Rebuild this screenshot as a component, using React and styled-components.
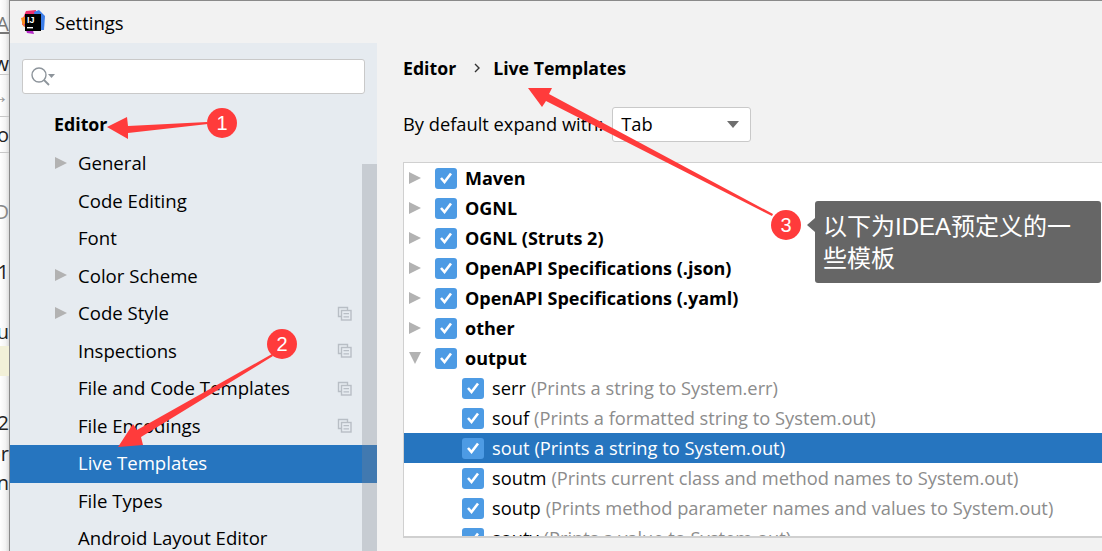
import React from 'react';
import styled, { createGlobalStyle } from 'styled-components';

const UI_FONT = '"Open Sans", "Noto Sans", "Liberation Sans", sans-serif';

const GlobalStyle = createGlobalStyle`
  html, body {
    margin: 0;
    padding: 0;
    background: #f2f2f2;
  }
  * {
    box-sizing: border-box;
  }
`;

const Page = styled.div`
  position: relative;
  display: flex;
  width: 1102px;
  height: 551px;
  overflow: hidden;
  font-family: ${UI_FONT};
  color: #000;
`;

const BackStrip = styled.div`
  flex: 0 0 9px;
  display: flex;
  flex-direction: column;
  overflow: hidden;
  background: linear-gradient(90deg, #fff 0%, #f4f4f4 60%, #dcdcdc 100%);
`;

const BackRow = styled.div`
  flex: 0 0 ${(p) => p.$h}px;
  height: ${(p) => p.$h}px;
  display: flex;
  align-items: center;
  justify-content: flex-end;
  font-size: 20px;
  line-height: 1;
  white-space: nowrap;
  color: ${(p) => p.$color || '#222'};
  background: ${(p) => p.$bg || 'transparent'};
  border-bottom: ${(p) => (p.$line ? '1px solid #c8c8c8' : 'none')};
  text-decoration: ${(p) => (p.$under ? 'underline' : 'none')};
`;

const Window = styled.div`
  flex: 1;
  display: flex;
  flex-direction: column;
  min-width: 0;
  border-top: 1px solid #8a8a8a;
  border-left: 1px solid #8a8a8a;
`;

const TitleBar = styled.div`
  flex: 0 0 42px;
  display: flex;
  align-items: center;
  gap: 10px;
  padding: 1px 0 0 11px;
  background: #f2f2f2;
  font-size: 18.5px;
`;

const LogoMark = styled.svg`
  margin-bottom: 1px;
`;

const Body = styled.div`
  flex: 1;
  display: flex;
  min-height: 0;
`;

const Sidebar = styled.aside`
  position: relative;
  flex: 0 0 367px;
  display: flex;
  flex-direction: column;
  overflow: hidden;
  padding-top: 16px;
  background: #e6ebf0;
`;

const SearchBox = styled.div`
  display: flex;
  align-items: center;
  flex: 0 0 35px;
  margin: 0 12px;
  padding-left: 7px;
  background: #fff;
  border: 1px solid #c9c9c9;
  border-radius: 3px;
`;

const NavList = styled.div`
  display: flex;
  flex-direction: column;
  margin-top: 11px;
`;

const NavRow = styled.div`
  position: relative;
  display: flex;
  align-items: center;
  height: 37.5px;
  flex: none;
  padding-left: 45px;
  font-size: 18.6px;
  color: #000;
`;

const NavSelected = styled(NavRow)`
  height: 38px;
  margin: 1px 0 -1.5px;
  padding-bottom: 3px;
  color: #fff;
  background: #2675bf;
`;

const NavHeading = styled(NavRow)`
  height: 38.75px;
  padding: 0 0 1px 44px;
  font-size: 17.8px;
  font-weight: 700;
`;

const NavArrow = styled.span`
  display: flex;
  align-items: center;
  width: 23px;
  flex: none;
`;

const NavCopy = styled.svg`
  position: absolute;
  left: 327px;
  top: 50%;
  margin-top: -7px;
`;

const ScrollTrack = styled.div`
  position: absolute;
  right: 0;
  top: 121px;
  bottom: 0;
  width: 15px;
  background: rgba(128, 134, 144, 0.3);
`;

const Content = styled.main`
  flex: 1;
  display: flex;
  flex-direction: column;
  min-width: 0;
  padding: 12px 0 13px 26px;
  background: #f2f2f2;
`;

const Breadcrumb = styled.div`
  display: flex;
  align-items: center;
  height: 26px;
  font-size: 17.7px;
  font-weight: 700;
`;

const CrumbSep = styled.svg`
  margin: 0 12px 0 17px;
`;

const ExpandRow = styled.div`
  display: flex;
  align-items: center;
  gap: 9px;
  margin-top: 26px;
  height: 35px;
  font-size: 18.3px;
`;

const ExpandLabel = styled.span`
  padding-bottom: 2px;
`;

const Select = styled.div`
  display: flex;
  align-items: center;
  justify-content: space-between;
  width: 139px;
  height: 35px;
  padding: 0 11px 0 8px;
  background: #fff;
  border: 1px solid #c9c9c9;
  border-radius: 3px;
`;

const Caret = styled.span`
  width: 0;
  height: 0;
  border-left: 6.5px solid transparent;
  border-right: 6.5px solid transparent;
  border-top: 7px solid #6e6e6e;
`;

const TreeBox = styled.div`
  flex: 1;
  margin-top: 20px;
  overflow: hidden;
  background: #fff;
  border-top: 1px solid #d0d0d0;
  border-left: 1px solid #d0d0d0;
  border-bottom: 2px solid #d0d0d0;
`;

const TreeRow = styled.div`
  display: flex;
  align-items: center;
  height: 30px;
  padding-left: ${(p) => (p.$child ? 58 : 5)}px;
  font-size: 18.3px;
  white-space: nowrap;
  background: ${(p) => (p.$selected ? '#2675bf' : 'transparent')};
  color: ${(p) => (p.$selected ? '#fff' : '#000')};
`;

const TreeName = styled.span`
  margin-left: 8px;
  font-weight: ${(p) => (p.$bold ? 700 : 400)};
  font-size: ${(p) => (p.$bold ? '18px' : 'inherit')};
  padding-bottom: ${(p) => (p.$bold ? 0 : 2)}px;
`;

const TreeHint = styled.span`
  margin-left: 5px;
  padding-bottom: 2px;
  color: ${(p) => (p.$selected ? '#fff' : '#8c8c8c')};
`;

const Triangle = styled.span`
  flex: none;
  display: block;
  width: 0;
  height: 0;
  ${(p) =>
    p.$open
      ? `margin-right: 14px;
         border-left: 6.5px solid transparent;
         border-right: 6.5px solid transparent;
         border-top: 12px solid #b2b2b2;`
      : `margin-right: 14px;
         border-top: 6.5px solid transparent;
         border-bottom: 6.5px solid transparent;
         border-left: 12px solid #b2b2b2;`}
`;

const SideTriangle = styled(Triangle)`
  margin: 0;
`;

const Check = styled.span`
  flex: none;
  display: flex;
  align-items: center;
  justify-content: center;
  width: 22px;
  height: 21px;
  border-radius: 3px;
  background: #4d9be4;
`;

const Overlay = styled.svg`
  position: absolute;
  left: 0;
  top: 0;
  pointer-events: none;
`;

const Badge = styled.div`
  position: absolute;
  left: ${(p) => p.$x - 15}px;
  top: ${(p) => p.$y - 15}px;
  width: 30px;
  height: 30px;
  display: flex;
  align-items: center;
  justify-content: center;
  border-radius: 50%;
  background: #ff3b3b;
  color: #fff;
  font-family: "Liberation Sans", sans-serif;
  font-size: 20px;
`;

const Tip = styled.div`
  position: absolute;
  left: 815px;
  top: 201px;
  width: 286px;
  height: 82px;
  padding: 10px 9px 0 8px;
  background: #666;
  border-radius: 3px;
  color: #fff;
  font-family: "Liberation Sans", "Noto Sans CJK SC", sans-serif;
  font-size: 24px;
  line-height: 32px;
  &::before {
    content: '';
    position: absolute;
    left: -8px;
    top: 17px;
    border-top: 7px solid transparent;
    border-bottom: 7px solid transparent;
    border-right: 8px solid #666;
  }
`;

const navItems = [
  { label: 'General', arrow: true },
  { label: 'Code Editing' },
  { label: 'Font' },
  { label: 'Color Scheme', arrow: true },
  { label: 'Code Style', arrow: true, copy: true },
  { label: 'Inspections', copy: true },
  { label: 'File and Code Templates', copy: true },
  { label: 'File Encodings', copy: true },
  { label: 'Live Templates', selected: true },
  { label: 'File Types' },
  { label: 'Android Layout Editor' },
];

const groups = [
  'Maven',
  'OGNL',
  'OGNL (Struts 2)',
  'OpenAPI Specifications (.json)',
  'OpenAPI Specifications (.yaml)',
  'other',
];

const templates = [
  { name: 'serr', hint: 'Prints a string to System.err' },
  { name: 'souf', hint: 'Prints a formatted string to System.out' },
  { name: 'sout', hint: 'Prints a string to System.out', selected: true },
  { name: 'soutm', hint: 'Prints current class and method names to System.out' },
  { name: 'soutp', hint: 'Prints method parameter names and values to System.out' },
  { name: 'soutv', hint: 'Prints a value to System.out' },
];

// what is left visible of the window behind the dialog
const backRows = [
  { h: 13 },
  { h: 22, text: 'A', color: '#777', under: true },
  { h: 18 },
  { h: 22, text: 'w', line: true },
  { h: 42, text: '→', color: '#999', line: true },
  { h: 36, text: 'o', line: true },
  { h: 44 },
  { h: 30, text: 'D', color: '#888' },
  { h: 30 },
  { h: 30, text: '1' },
  { h: 31 },
  { h: 28, text: 'u' },
  { h: 30, bg: '#f2f0d8' },
  { h: 32 },
  { h: 30, text: '02' },
  { h: 32, text: 'or' },
  { h: 26, text: 'n' },
];

function CheckMark() {
  return (
    <Check>
      <svg width="14" height="12" viewBox="0 0 14 12">
        <path d="M2 6 L5.5 10 L12 1.5" fill="none" stroke="#fff" strokeWidth="2.6" />
      </svg>
    </Check>
  );
}

function CopyIcon() {
  return (
    <NavCopy width="15" height="15" viewBox="0 0 15 15">
      <path d="M4 10.5 H1.5 V1.5 H10.5 V4" fill="none" stroke="#b8bec5" strokeWidth="1.4" />
      <rect x="4.5" y="4.5" width="9.5" height="9.5" fill="none" stroke="#b8bec5" strokeWidth="1.4" />
      <path d="M6.5 7.7 H12 M6.5 10.8 H12" stroke="#b8bec5" strokeWidth="1.3" />
    </NavCopy>
  );
}

function Logo() {
  return (
    <LogoMark width="24" height="24" viewBox="0 0 24 24">
      <polygon points="5,1 15,0 14,12 1,15 2,8" fill="#f0306e" />
      <polygon points="0,8 6,6 6,18 2,16" fill="#fa8a1e" />
      <polygon points="13,2 18,0 24,6 23,20 16,20" fill="#3d7ee8" />
      <polygon points="3,14 10,14 13,24 6,23" fill="#b52ac8" />
      <rect x="4" y="4" width="16" height="17" fill="#000" />
      <text x="6" y="13" fontFamily="Liberation Sans, sans-serif" fontWeight="700" fontSize="9" fill="#fff">IJ</text>
      <rect x="6" y="17" width="6" height="1.4" fill="#fff" />
    </LogoMark>
  );
}

function SearchIcon() {
  return (
    <svg width="26" height="24" viewBox="0 0 26 24">
      <circle cx="9" cy="10" r="7" fill="none" stroke="#8d949b" strokeWidth="1.4" />
      <path d="M14 15 L19 20" stroke="#8d949b" strokeWidth="1.8" />
      <polygon points="18,9 25,9 21.5,13" fill="#8d949b" />
    </svg>
  );
}

export default function App() {
  return (
    <Page>
      <GlobalStyle />
      <BackStrip>
        {backRows.map((r, i) => (
          <BackRow key={i} $h={r.h} $color={r.color} $bg={r.bg} $line={r.line} $under={r.under}>
            {r.text}
          </BackRow>
        ))}
      </BackStrip>
      <Window>
        <TitleBar>
          <Logo />
          Settings
        </TitleBar>
        <Body>
          <Sidebar>
            <SearchBox>
              <SearchIcon />
            </SearchBox>
            <NavList>
              <NavHeading>Editor</NavHeading>
              {navItems.map((item) => {
                const Row = item.selected ? NavSelected : NavRow;
                return (
                  <Row key={item.label}>
                    <NavArrow>{item.arrow && <SideTriangle />}</NavArrow>
                    {item.label}
                    {item.copy && <CopyIcon />}
                  </Row>
                );
              })}
            </NavList>
            <ScrollTrack />
          </Sidebar>
          <Content>
            <Breadcrumb>
              Editor
              <CrumbSep width="8" height="12" viewBox="0 0 8 12">
                <path d="M2 2 L6 6 L2 10" fill="none" stroke="#333" strokeWidth="1.4" />
              </CrumbSep>
              Live Templates
            </Breadcrumb>
            <ExpandRow>
              <ExpandLabel>By default expand with:</ExpandLabel>
              <Select>
                <ExpandLabel>Tab</ExpandLabel>
                <Caret />
              </Select>
            </ExpandRow>
            <TreeBox>
              {groups.map((name) => (
                <TreeRow key={name}>
                  <Triangle />
                  <CheckMark />
                  <TreeName $bold>{name}</TreeName>
                </TreeRow>
              ))}
              <TreeRow>
                <Triangle $open />
                <CheckMark />
                <TreeName $bold>output</TreeName>
              </TreeRow>
              {templates.map((t) => (
                <TreeRow key={t.name} $child $selected={t.selected}>
                  <CheckMark />
                  <TreeName>{t.name}</TreeName>
                  <TreeHint $selected={t.selected}>({t.hint})</TreeHint>
                </TreeRow>
              ))}
            </TreeBox>
          </Content>
        </Body>
      </Window>
      <Overlay width="1102" height="551" viewBox="0 0 1102 551">
        <polygon points="107,127 127,117 128,126 207,122 208,124 128,133 128,139" fill="#ff3b3b" />
        <polygon points="118,447 133,424 137,430 272,354 273,356 141,437 143,445" fill="#ff3b3b" />
        <polygon points="528,88 552,88 549,94 773,214 772,216 546,101 542,107" fill="#ff3b3b" />
      </Overlay>
      <Badge $x={222} $y={123}>1</Badge>
      <Badge $x={282} $y={344}>2</Badge>
      <Badge $x={786} $y={225}>3</Badge>
      <Tip>以下为IDEA预定义的一些模板</Tip>
    </Page>
  );
}
